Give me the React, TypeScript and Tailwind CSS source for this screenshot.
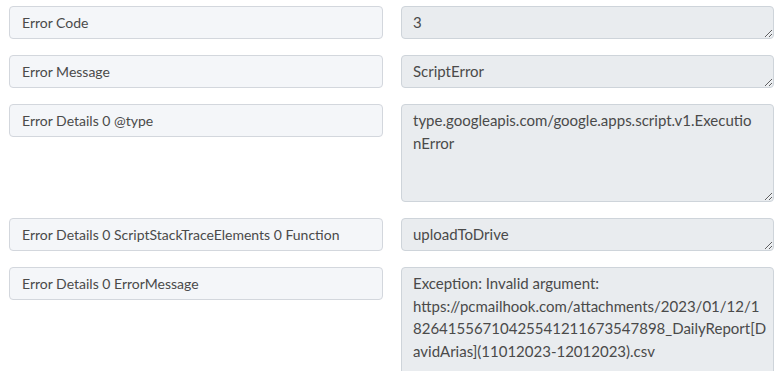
import React from "react";

type Row = { label: string; value: string; h: string };

const rows: Row[] = [
  { label: "Error Code", value: "3", h: "h-[33px]" },
  { label: "Error Message", value: "ScriptError", h: "h-[33px]" },
  {
    label: "Error Details 0 @type",
    value: "type.googleapis.com/google.apps.script.v1.Executio\nnError",
    h: "h-[98px]",
  },
  {
    label: "Error Details 0 ScriptStackTraceElements 0 Function",
    value: "uploadToDrive",
    h: "h-[33px]",
  },
  {
    label: "Error Details 0 ErrorMessage",
    value: [
      "Exception: Invalid argument:",
      "https://pcmailhook.com/attachments/2023/01/12/1",
      "82641556710425541211673547898_DailyReport[D",
      "avidArias](11012023-12012023).csv",
    ].join("\n"),
    h: "h-[122px]",
  },
];

const App: React.FC = () => {
  return (
    <div className="h-[371px] overflow-hidden bg-white pl-[9px] pt-[6px] font-['Lato','Open_Sans',sans-serif] text-[14px] text-[#4a4a4a]">
      <div className="flex flex-col gap-[16px]">
        {rows.map((r) => (
          <div key={r.label} className="flex items-start gap-[18px]">
            <div className="flex h-[33px] w-[374px] shrink-0 items-center rounded-[4px] border border-[#d3d7dd] bg-[#f4f6f9] px-[12px]">
              {r.label}
            </div>
            <textarea
              readOnly
              value={r.value}
              className={`${r.h} w-[373px] shrink-0 overflow-hidden rounded-[4px] border border-[#ced4da] bg-[#e9ecef] pl-[11px] pr-[4px] pt-[4px] text-[15px] leading-[22.5px] text-[#4a4a4a] outline-none`}
            />
          </div>
        ))}
      </div>
    </div>
  );
};

export default App;
